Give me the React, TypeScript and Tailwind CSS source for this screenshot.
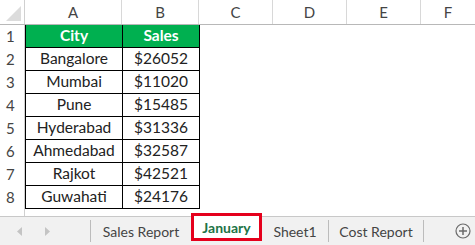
import React from "react";

const rows: [string, string][] = [
  ["Bangalore", "$26052"],
  ["Mumbai", "$11020"],
  ["Pune", "$15485"],
  ["Hyderabad", "$31336"],
  ["Ahmedabad", "$32587"],
  ["Rajkot", "$42521"],
  ["Guwahati", "$24176"],
];

export default function App() {
  return (
    <div
      className="w-[475px] h-[245px] bg-white overflow-hidden flex flex-col text-[#222]"
      style={{ fontFamily: "Lato, 'Open Sans', sans-serif" }}
    >
      {/* Column header */}
      <div className="flex h-[25px] border-b border-[#b8b8b8] text-[15px] text-[#444] shrink-0">
        <div className="w-[25px] shrink-0 border-r border-[#d0d0d0] relative">
          <svg className="absolute left-0 top-0" width="25" height="24" viewBox="0 0 25 24">
            <polygon points="6,21 21,6 21,21" fill="#dcdcdc" />
          </svg>
        </div>
        <div className="w-[97px] shrink-0 border-r border-[#d8d8d8] flex items-center justify-center">A</div>
        <div className="w-[77px] shrink-0 border-r border-[#d8d8d8] flex items-center justify-center">B</div>
        <div className="w-[74px] shrink-0 border-r border-[#d8d8d8] flex items-center justify-center">C</div>
        <div className="w-[74px] shrink-0 border-r border-[#d8d8d8] flex items-center justify-center">D</div>
        <div className="w-[74px] shrink-0 border-r border-[#d8d8d8] flex items-center justify-center">E</div>
        <div className="flex-1 flex items-center justify-center">F</div>
      </div>

      {/* Body */}
      <div className="flex flex-1">
        <div className="w-[25px] shrink-0 border-r border-[#d0d0d0] text-[15px] text-[#444]">
          {[1, 2, 3, 4, 5, 6, 7, 8].map((n) => (
            <div key={n} className="h-[23px] flex items-center pl-[6px]">
              {n}
            </div>
          ))}
        </div>
        <div className="flex flex-col">
          <div className="flex h-[23px] bg-[#00b050] text-white font-bold text-[15.5px] border-b border-l border-black">
            <div className="w-[97px] border-r border-black flex items-center justify-center">City</div>
            <div className="w-[77px] border-r border-black flex items-center justify-center">Sales</div>
          </div>
          {rows.map(([c, s]) => (
            <div key={c} className="flex h-[23px] text-[15.5px] border-b border-l border-black">
              <div className="w-[97px] border-r border-black flex items-center justify-center">{c}</div>
              <div className="w-[77px] border-r border-black flex items-center justify-center">{s}</div>
            </div>
          ))}
        </div>
      </div>

      {/* Tab bar */}
      <div className="h-[29px] shrink-0 bg-[#f1f1f1] border-t border-[#c8c8c8] flex items-stretch text-[14px] text-[#444] relative">
        <div className="w-[91px] shrink-0 flex items-center border-r border-[#bcbcbc] my-[3px]">
          <svg className="ml-[17px]" width="6" height="9" viewBox="0 0 6 9">
            <polygon points="5,0 0,4.5 5,9" fill="#c4c4c4" />
          </svg>
          <svg className="ml-[22px]" width="6" height="9" viewBox="0 0 6 9">
            <polygon points="0,0 5,4.5 0,9" fill="#c4c4c4" />
          </svg>
        </div>
        <div className="w-[100px] shrink-0 flex items-center justify-center">Sales Report</div>
        <div className="w-[71px] shrink-0 -mt-[4px] mb-[4px] bg-white border-[3px] border-[#e5001c] flex items-center justify-center font-bold text-[#217346]">
          January
        </div>
        <div className="w-[67px] shrink-0 flex items-center justify-center border-r border-[#bcbcbc] my-[3px]">Sheet1</div>
        <div className="w-[95px] shrink-0 flex items-center justify-center border-r border-[#bcbcbc] my-[3px]">Cost Report</div>
        <div className="flex-1 flex items-center justify-end pr-[4px]">
          <svg width="16" height="16" viewBox="0 0 16 16">
            <circle cx="8" cy="8" r="7" fill="none" stroke="#6a6a6a" strokeWidth="1.2" />
            <line x1="8" y1="4" x2="8" y2="12" stroke="#6a6a6a" strokeWidth="1.5" />
            <line x1="4" y1="8" x2="12" y2="8" stroke="#6a6a6a" strokeWidth="1.5" />
          </svg>
        </div>
      </div>
    </div>
  );
}
